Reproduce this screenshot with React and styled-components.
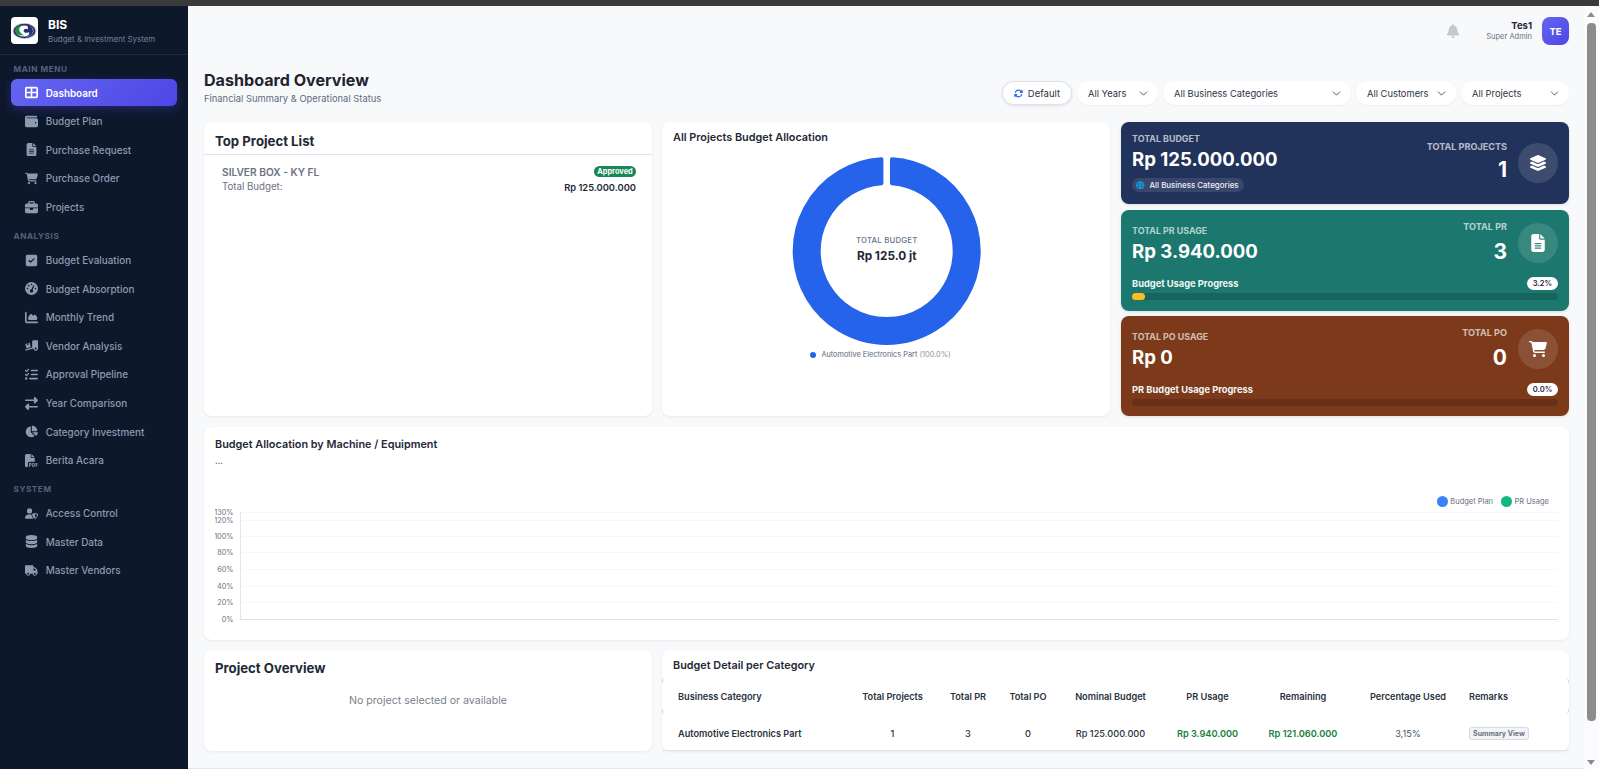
import React from "react";
import styled, { createGlobalStyle } from "styled-components";
import {
  FaTableCellsLarge, FaWallet, FaFileLines, FaCartShopping, FaBriefcase, FaSquareCheck, FaGaugeHigh,
  FaChartArea, FaTruckRampBox, FaListCheck, FaRightLeft, FaChartPie, FaFilePdf, FaUserShield,
  FaDatabase, FaTruck, FaLayerGroup, FaBell, FaRotate, FaGlobe,
} from "react-icons/fa6";
import { ChevronDown } from "lucide-react";

const Global = createGlobalStyle`
  html, body { margin: 0; padding: 0; height: 100%; overflow: hidden; background: #f8f9fb; }
  body { font-family: Inter, "Liberation Sans", sans-serif; color: #1f2937; }
  * { box-sizing: border-box; }
`;

const Frame = styled.div`display: flex; flex-direction: column; height: 100vh;`;
const BrowserStrip = styled.div`height: 6px; flex: none; background: #3a3a3a;`;
const Body = styled.div`display: flex; flex: 1; min-height: 0;`;

const Sidebar = styled.aside`width: 188px; flex: none; background: #0e182b;`;
const Brand = styled.div`
  height: 49px; padding: 11px 11px 0; display: flex; gap: 10px;
  border-bottom: 1px solid rgba(255,255,255,.09);
`;
const LogoBox = styled.div`
  width: 27px; height: 27px; background: #fff; border-radius: 4px; display: flex;
  align-items: center; justify-content: center; flex: none;
`;
const BrandText = styled.div`display: flex; flex-direction: column; padding-top: 1px;`;
const BrandName = styled.div`font-size: 12px; font-weight: 700; color: #fff; line-height: 14px;`;
const BrandSub = styled.div`font-size: 7.9px; color: #74809a; line-height: 11px; margin-top: 2px; white-space: nowrap;`;
const Nav = styled.nav`padding: 8px 11px 0; display: flex; flex-direction: column;`;
const SectionLabel = styled.div`
  font-size: 8.2px; font-weight: 700; letter-spacing: .55px; color: #55627a; line-height: 12px;
  padding-left: 2.5px; margin-bottom: 4.2px; margin-top: ${p => p.$first ? "0" : "8.2px"};
`;
const Item = styled.div`
  height: 27px; flex: none; margin-bottom: 1.6px; padding-left: 12px; display: flex; align-items: center; gap: 6.7px;
  border-radius: 6px; font-size: 9.9px; font-weight: ${p => p.$active ? 600 : 500};
  color: ${p => p.$active ? "#fff" : "#8d9bb1"};
  background: ${p => p.$active ? "linear-gradient(135deg,#6366f1,#4f46e5)" : "transparent"};
  box-shadow: ${p => p.$active ? "0 3px 10px rgba(79,70,229,.35)" : "none"};
`;
const ItemIcon = styled.span`width: 16px; height: 16px; display: flex; align-items: center; justify-content: center; font-size: 13px; flex: none;`;

const Main = styled.main`
  flex: 1; min-width: 0; padding: 11px 15px 0 16px; display: flex; flex-direction: column;
  border-bottom: 1px solid #e3e6ee;
`;
const TopBar = styled.div`display: flex; justify-content: flex-end; align-items: center; height: 28px;`;
const BellWrap = styled.div`color: #c3c7ce; font-size: 14px; display: flex; margin-right: 26px;`;
const User = styled.div`text-align: right; margin-right: 10px;`;
const UserName = styled.div`font-size: 9.5px; font-weight: 700; color: #1f2937; line-height: 12px;`;
const UserRole = styled.div`font-size: 7.5px; color: #6b7280; line-height: 10px;`;
const Avatar = styled.div`
  width: 27px; height: 28px; border-radius: 8px; background: linear-gradient(135deg,#6366f1,#4f46e5);
  color: #fff; font-size: 9.5px; font-weight: 700; display: flex; align-items: center; justify-content: center;
`;
const TitleRow = styled.div`display: flex; justify-content: space-between; align-items: flex-end; margin: 23px 0 17px;`;
const H1 = styled.h1`margin: 0; font-size: 16.1px; font-weight: 700; line-height: 22px; color: #1f2330; padding-top: 1px;`;
const Sub = styled.div`font-size: 9.4px; color: #5f6b7e; line-height: 12px; margin-top: 2px;`;
const Filters = styled.div`display: flex; gap: 5px;`;
const Pill = styled.div`
  height: 24px; border-radius: 12px; background: #fff; display: flex; align-items: center;
  justify-content: space-between; width: ${p => p.$w}px; padding: 0 8px 0 11px; font-size: 9.35px; color: #2c3442;
  box-shadow: 0 1px 2px rgba(0,0,0,.05);
`;
const DefaultPill = styled(Pill)`
  justify-content: center; gap: 5px; padding: 0; font-size: 9.5px; border: 1px solid #dfe2ea; box-shadow: 0 1px 3px rgba(0,0,0,.1);
  svg { color: #2563eb; font-size: 9px; }
`;

const TopGrid = styled.div`display: grid; grid-template-columns: 448px 449px 448px; column-gap: 10px; height: 294px;`;
const Card = styled.section`
  background: #fff; border-radius: 8px; box-shadow: 0 1px 3px rgba(15,23,42,.07); min-width: 0;
`;
const ListHead = styled.div`
  height: 33px; padding: 5px 11px 0; display: flex; align-items: center; border-bottom: 1px solid #dfe2ea;
  font-size: 13.2px; font-weight: 700; color: #1f2937;
`;
const ListRows = styled.div`padding: 9px 16px 0 18px;`;
const ListRow = styled.div`display: flex; justify-content: space-between; align-items: center; height: ${p => p.$h}px;`;
const ProjectName = styled.div`font-size: 10.2px; font-weight: 600; color: #6b7280;`;
const Badge = styled.div`
  background: #198754; color: #fff; font-size: 7.4px; font-weight: 700; border-radius: 6px;
  height: 11px; width: 42px; display: flex; align-items: center; justify-content: center;
`;
const TotalLabel = styled.div`font-size: 9.7px; color: #6b7280;`;
const TotalValue = styled.div`font-size: 9.35px; font-weight: 600; color: #1f2937; padding-top: 1px;`;

const DonutCard = styled(Card)`padding: 9px 11px 0; margin-right: 1px; display: flex; flex-direction: column; align-items: stretch;`;
const CardTitle = styled.h3`margin: 0; font-size: 10.85px; font-weight: 600; line-height: 12px; color: #1f2937;`;
const DonutWrap = styled.div`position: relative; width: 192px; height: 192px; margin: 12px auto 0; transform: translateX(.7px);`;
const DonutCenter = styled.div`
  position: absolute; inset: 0; padding-bottom: 4px; display: flex; flex-direction: column; align-items: center; justify-content: center;
`;
const CenterLabel = styled.div`font-size: 7.8px; font-weight: 500; letter-spacing: .2px; color: #64748b; line-height: 10px;`;
const CenterValue = styled.div`font-size: 11.8px; font-weight: 700; color: #1f2937; line-height: 16px; margin-top: 3px;`;
const DonutLegend = styled.div`
  display: flex; align-items: center; justify-content: center; gap: 5px; margin-top: 3px; padding-right: 11px;
  font-size: 7.35px; color: #5b6678;
`;
const LegendSoft = styled.span`color: #8b93a1;`;
const Dot = styled.span`
  width: ${p => p.$s}px; height: ${p => p.$s}px; border-radius: 50%; background: ${p => p.$c}; flex: none; display: inline-block;
`;

const StatColumn = styled.div`display: flex; flex-direction: column; gap: 5.5px;`;
const Stat = styled.div`
  height: ${p => p.$h}px; background: ${p => p.$bg}; border-radius: 8px; padding: ${p => p.$pad}; color: #fff;
  display: flex; flex-direction: column; box-shadow: 0 1px 3px rgba(15,23,42,.12);
`;
const StatTop = styled.div`display: flex; align-items: ${p => p.$center ? "center" : "flex-start"}; justify-content: space-between;`;
const StatLeft = styled.div`flex: 1; padding-top: ${p => p.$pt || 0}px;`;
const StatLabel = styled.div`font-size: 8.9px; font-weight: 700; color: rgba(255,255,255,.68); line-height: 12px;`;
const StatValue = styled.div`font-size: 18.6px; font-weight: 700; line-height: 24px; margin-top: ${p => p.$mt || 0}px;`;
const Scope = styled.div`
  display: inline-flex; align-items: center; gap: 5px; height: 14px; padding: 0 5px 0 4px; border-radius: 7px;
  background: rgba(255,255,255,.1); font-size: 7.9px; font-weight: 500; color: #eef1f7; margin-top: 7px;
  svg { color: #0ea5e9; font-size: 8.5px; }
`;
const StatRight = styled.div`
  text-align: right;
  margin: ${p => p.$tight ? "-2px 11px -6px 0" : "0 11px 0 0"};
  padding-bottom: ${p => p.$tight ? 0 : 2}px;
`;
const RightLabel = styled.div`font-size: 9.1px; font-weight: 700; color: rgba(255,255,255,.68); line-height: 12px;`;
const RightValue = styled.div`font-size: 21px; font-weight: 700; line-height: 26px; margin-top: ${p => p.$mt || 0}px;`;
const IconCircle = styled.div`
  width: 40px; height: 40px; border-radius: 50%; background: rgba(255,255,255,.12); flex: none;
  display: flex; align-items: center; justify-content: center; font-size: 18px; color: #fff;
`;
const ProgressHead = styled.div`display: flex; justify-content: space-between; align-items: center; margin-top: 14px; height: 13px;`;
const ProgressLabel = styled.div`font-size: 9.3px; font-weight: 700; color: #f1f5f4;`;
const ProgressBadge = styled.div`
  height: 13px; width: 31px; border-radius: 7px; background: #fff; color: #1f2937; font-size: 7.6px;
  font-weight: 600; display: flex; align-items: center; justify-content: center;
`;
const Track = styled.div`height: 7px; border-radius: 4px; background: rgba(0,0,0,.16); margin-top: 3px;`;
const Fill = styled.div`height: 7px; border-radius: 4px; background: #fbbf24;`;

const ChartCard = styled(Card)`margin-top: 11px; height: 213px; padding: 10.5px 11px 0;`;
const Dots = styled.div`font-size: 8px; font-weight: 700; color: #475569; line-height: 8px; margin-top: 7px;`;
const ChartLegend = styled.div`
  display: flex; justify-content: flex-end; align-items: center; height: 12px; margin-top: 30.5px; padding-right: 9px;
  font-size: 7.5px; color: #6b7280;
`;
const LegendItem = styled.div`display: flex; align-items: center; gap: 2.5px; margin-left: 8px;`;
const ChartSvg = styled.svg`display: block; margin-top: 0;`;

const BottomGrid = styled.div`display: grid; grid-template-columns: 448px 1fr; gap: 10px; margin-top: 10px; height: 101px;`;
const OverviewTitle = styled.h2`margin: 0; padding: 10px 11px 0; font-size: 13.2px; font-weight: 700; line-height: 16px; color: #1f2937;`;
const Empty = styled.div`text-align: center; font-size: 10.6px; color: #7b818b; margin-top: 18px; line-height: 14px;`;
const DetailTitle = styled(CardTitle)`padding: 9px 11px 0;`;
const Table = styled.table`
  width: 100%; table-layout: fixed; border-collapse: collapse; margin-top: 7px; font-size: 9.2px;
`;
const Col = styled.col`width: ${p => p.$w}px;`;
const Th = styled.th`
  height: 36px; padding: 0 0 0 ${p => p.$pl || 0}px; font-weight: 600; color: #2a3240; white-space: nowrap;
  text-align: ${p => p.$left ? "left" : "center"}; position: relative;
`;
const CornerTop = styled.span`
  position: absolute; top: 0; width: 4px; height: 5px;
  ${p => p.$side === "l" ? "left:0; border-left:1px solid #d5d9e0; border-top-left-radius:5px;" : "right:0; border-right:1px solid #d5d9e0; border-top-right-radius:5px;"}
`;
const CornerBottom = styled.span`
  position: absolute; bottom: 0; width: 4px; height: 5px;
  ${p => p.$side === "l" ? "left:0; border-left:1px solid #d5d9e0; border-bottom-left-radius:5px;" : "right:0; border-right:1px solid #d5d9e0; border-bottom-right-radius:5px;"}
`;
const Td = styled.td`
  height: 36px; padding: 3px 0 0 ${p => p.$pl || 0}px; white-space: nowrap; border-bottom: 1px solid #dfe2ea;
  text-align: ${p => p.$left ? "left" : "center"};
  font-weight: ${p => p.$w || 400}; color: ${p => p.$c || "#2a3240"};
`;
const Remark = styled.span`
  display: inline-flex; align-items: center; justify-content: center; width: 60px; height: 13px; border-radius: 3px;
  background: #f3f4f6; border: 1px solid #d7dae0; font-size: 7px; font-weight: 700; color: #6b7280;
`;

const Scrollbar = styled.div`
  width: 15px; flex: none; background: #fbfbfd; display: flex; flex-direction: column; align-items: center;
  padding: 0 2px 0 1px;
`;
const ArrowUp = styled.div`
  width: 0; height: 0; margin-top: 6px; border-left: 4.5px solid transparent; border-right: 4.5px solid transparent;
  border-bottom: 5px solid #8c8c8c;
`;
const Thumb = styled.div`width: 9px; height: 698px; margin-top: 6px; border-radius: 4px; background: #8c8c8c;`;
const ArrowDown = styled.div`
  width: 0; height: 0; margin-top: 39px; border-left: 4.5px solid transparent; border-right: 4.5px solid transparent;
  border-top: 5px solid #8c8c8c;
`;

const Logo = () => (
  <svg width="25" height="25" viewBox="0 0 25 25">
    <ellipse cx="12.500" cy="13" rx="12" ry="8" fill="#c9cde0" />
    <ellipse cx="12.500" cy="13" rx="11" ry="7.200" fill="#25306e" />
    <ellipse cx="12.500" cy="13" rx="9" ry="5.600" fill="#fff" />
    <path d="M3.200 13c0-3.500 3.500-6 7.800-6 -2.800 1.300-4.500 3.300-3.600 5.800 .7 2.200 2.800 3.600 4.800 4.500 -5 .4-9-1.300-9-4.300z" fill="#1f8f3f" />
    <path d="M15 7.300c3.500 .5 6 2.800 6 5.700s-3 5.200-7 5.200c2.500-1 4-2.300 3-4.300-1 1-3 1.300-4.500 .4 -1.500-1-1-2.800 .5-3.300 1-.4 2-.2 3 .3 0-1.400-.2-2.800-1-4z" fill="#25306e" />
  </svg>
);

const Donut = () => (
  <svg width="192" height="192" viewBox="-96 -96 192 192">
    <path
      d="M5.300 -91.850 A92 92 0 1 1 -5.300 -91.850 L-5.300 -67.790 A68 68 0 1 0 5.300 -67.790 Z"
      fill="#2563eb" stroke="#2563eb" strokeWidth="4" strokeLinejoin="round"
    />
  </svg>
);

const ticks = [[5, "130%"], [13, "120%"], [29, "100%"], [45, "80%"], [62, "60%"], [79, "40%"], [95, "20%"], [112, "0%"]];
const BarChart = () => (
  <ChartSvg width="1343" height="118" viewBox="0 0 1343 118">
    {ticks.map(([y, t]) => (
      <g key={t}>
        <line x1="25" x2="1343" y1={y + .5} y2={y + .5} stroke={t === "0%" ? "#dfe2e8" : "#f6f7f9"} />
        <text x="18.500" y={y + 2.7} textAnchor="end" fontSize="7.3" fill="#6b7280" fontFamily="Inter, sans-serif">{t}</text>
      </g>
    ))}
    <line x1="25.500" x2="25.500" y1="5" y2="112" stroke="#e3e5ea" />
  </ChartSvg>
);

const main = [
  [FaTableCellsLarge, "Dashboard", true], [FaWallet, "Budget Plan"], [FaFileLines, "Purchase Request"],
  [FaCartShopping, "Purchase Order"], [FaBriefcase, "Projects"],
];
const analysis = [
  [FaSquareCheck, "Budget Evaluation"], [FaGaugeHigh, "Budget Absorption"], [FaChartArea, "Monthly Trend"],
  [FaTruckRampBox, "Vendor Analysis"], [FaListCheck, "Approval Pipeline"], [FaRightLeft, "Year Comparison"],
  [FaChartPie, "Category Investment"], [FaFilePdf, "Berita Acara"],
];
const system = [[FaUserShield, "Access Control"], [FaDatabase, "Master Data"], [FaTruck, "Master Vendors"]];
const NavItems = ({ items }) => items.map(([Icon, label, active]) => (
  <Item key={label} $active={active}><ItemIcon><Icon /></ItemIcon>{label}</Item>
));
const Select = ({ w, children }) => (
  <Pill $w={w}>{children}<ChevronDown size={13} strokeWidth={1.6} color="#374151" /></Pill>
);

export default function App() {
  return (
    <Frame>
      <Global />
      <BrowserStrip />
      <Body>
        <Sidebar>
          <Brand>
            <LogoBox><Logo /></LogoBox>
            <BrandText>
              <BrandName>BIS</BrandName>
              <BrandSub>Budget &amp; Investment System</BrandSub>
            </BrandText>
          </Brand>
          <Nav>
            <SectionLabel $first>MAIN MENU</SectionLabel>
            <NavItems items={main} />
            <SectionLabel>ANALYSIS</SectionLabel>
            <NavItems items={analysis} />
            <SectionLabel>SYSTEM</SectionLabel>
            <NavItems items={system} />
          </Nav>
        </Sidebar>
        <Main>
          <TopBar>
            <BellWrap><FaBell /></BellWrap>
            <User>
              <UserName>Tes1</UserName>
              <UserRole>Super Admin</UserRole>
            </User>
            <Avatar>TE</Avatar>
          </TopBar>
          <TitleRow>
            <div>
              <H1>Dashboard Overview</H1>
              <Sub>Financial Summary &amp; Operational Status</Sub>
            </div>
            <Filters>
              <DefaultPill $w={70}><FaRotate />Default</DefaultPill>
              <Select w={81}>All Years</Select>
              <Select w={188}>All Business Categories</Select>
              <Select w={100}>All Customers</Select>
              <Select w={108}>All Projects</Select>
            </Filters>
          </TitleRow>
          <TopGrid>
            <Card>
              <ListHead>Top Project List</ListHead>
              <ListRows>
                <ListRow $h={15}><ProjectName>SILVER BOX - KY FL</ProjectName><Badge>Approved</Badge></ListRow>
                <ListRow $h={15}><TotalLabel>Total Budget:</TotalLabel><TotalValue>Rp 125.000.000</TotalValue></ListRow>
              </ListRows>
            </Card>
            <DonutCard>
              <CardTitle>All Projects Budget Allocation</CardTitle>
              <DonutWrap>
                <Donut />
                <DonutCenter>
                  <CenterLabel>TOTAL BUDGET</CenterLabel>
                  <CenterValue>Rp 125.0 jt</CenterValue>
                </DonutCenter>
              </DonutWrap>
              <DonutLegend>
                <Dot $s={6} $c="#2563eb" />
                <span>Automotive Electronics Part <LegendSoft>(100.0%)</LegendSoft></span>
              </DonutLegend>
            </DonutCard>
            <StatColumn>
              <Stat $h={82} $bg="#22335b" $pad="10.5px 11px 0">
                <StatTop $center>
                  <StatLeft>
                    <StatLabel>TOTAL BUDGET</StatLabel>
                    <StatValue $mt={2.5}>Rp 125.000.000</StatValue>
                    <Scope><FaGlobe />All Business Categories</Scope>
                  </StatLeft>
                  <StatRight>
                    <RightLabel>TOTAL PROJECTS</RightLabel>
                    <RightValue $mt={4}>1</RightValue>
                  </StatRight>
                  <IconCircle><FaLayerGroup /></IconCircle>
                </StatTop>
              </Stat>
              <Stat $h={101} $bg="#1c786e" $pad="13px 11px 0">
                <StatTop>
                  <StatLeft $pt={2}>
                    <StatLabel>TOTAL PR USAGE</StatLabel>
                    <StatValue $mt={2}>Rp 3.940.000</StatValue>
                  </StatLeft>
                  <StatRight $tight>
                    <RightLabel>TOTAL PR</RightLabel>
                    <RightValue $mt={6}>3</RightValue>
                  </StatRight>
                  <IconCircle><FaFileLines /></IconCircle>
                </StatTop>
                <ProgressHead><ProgressLabel>Budget Usage Progress</ProgressLabel><ProgressBadge>3.2%</ProgressBadge></ProgressHead>
                <Track><Fill style={{ width: 13 }} /></Track>
              </Stat>
              <Stat $h={100} $bg="#7c3a1b" $pad="13px 11px 0">
                <StatTop>
                  <StatLeft $pt={2}>
                    <StatLabel>TOTAL PO USAGE</StatLabel>
                    <StatValue $mt={2}>Rp 0</StatValue>
                  </StatLeft>
                  <StatRight $tight>
                    <RightLabel>TOTAL PO</RightLabel>
                    <RightValue $mt={6}>0</RightValue>
                  </StatRight>
                  <IconCircle><FaCartShopping /></IconCircle>
                </StatTop>
                <ProgressHead><ProgressLabel>PR Budget Usage Progress</ProgressLabel><ProgressBadge>0.0%</ProgressBadge></ProgressHead>
                <Track />
              </Stat>
            </StatColumn>
          </TopGrid>
          <ChartCard>
            <CardTitle>Budget Allocation by Machine / Equipment</CardTitle>
            <Dots>...</Dots>
            <ChartLegend>
              <LegendItem><Dot $s={11} $c="#3b82f6" />Budget Plan</LegendItem>
              <LegendItem><Dot $s={11} $c="#10b981" />PR Usage</LegendItem>
            </ChartLegend>
            <BarChart />
          </ChartCard>
          <BottomGrid>
            <Card>
              <OverviewTitle>Project Overview</OverviewTitle>
              <Empty>No project selected or available</Empty>
            </Card>
            <Card>
              <DetailTitle>Budget Detail per Category</DetailTitle>
              <Table>
                <colgroup>
                  <Col $w={180} /><Col $w={101} /><Col $w={50} /><Col $w={70} /><Col $w={95} />
                  <Col $w={99} /><Col $w={92} /><Col $w={118} /><Col $w={102} />
                </colgroup>
                <thead>
                  <tr>
                    <Th $left $pl={16}><CornerTop $side="l" /><CornerBottom $side="l" />Business Category</Th>
                    <Th>Total Projects</Th>
                    <Th>Total PR</Th>
                    <Th>Total PO</Th>
                    <Th>Nominal Budget</Th>
                    <Th>PR Usage</Th>
                    <Th>Remaining</Th>
                    <Th>Percentage Used</Th>
                    <Th $left $pl={2}>Remarks<CornerTop $side="r" /><CornerBottom $side="r" /></Th>
                  </tr>
                </thead>
                <tbody>
                  <tr>
                    <Td $left $pl={16} $w={600}>Automotive Electronics Part</Td>
                    <Td $w={500}>1</Td>
                    <Td $w={500}>3</Td>
                    <Td $w={500}>0</Td>
                    <Td $w={500}>Rp 125.000.000</Td>
                    <Td $w={600} $c="#15803d">Rp 3.940.000</Td>
                    <Td $w={600} $c="#15803d">Rp 121.060.000</Td>
                    <Td $c="#4b5563">3,15%</Td>
                    <Td $left $pl={2}><Remark>Summary View</Remark></Td>
                  </tr>
                </tbody>
              </Table>
            </Card>
          </BottomGrid>
        </Main>
        <Scrollbar>
          <ArrowUp />
          <Thumb />
          <ArrowDown />
        </Scrollbar>
      </Body>
    </Frame>
  );
}
